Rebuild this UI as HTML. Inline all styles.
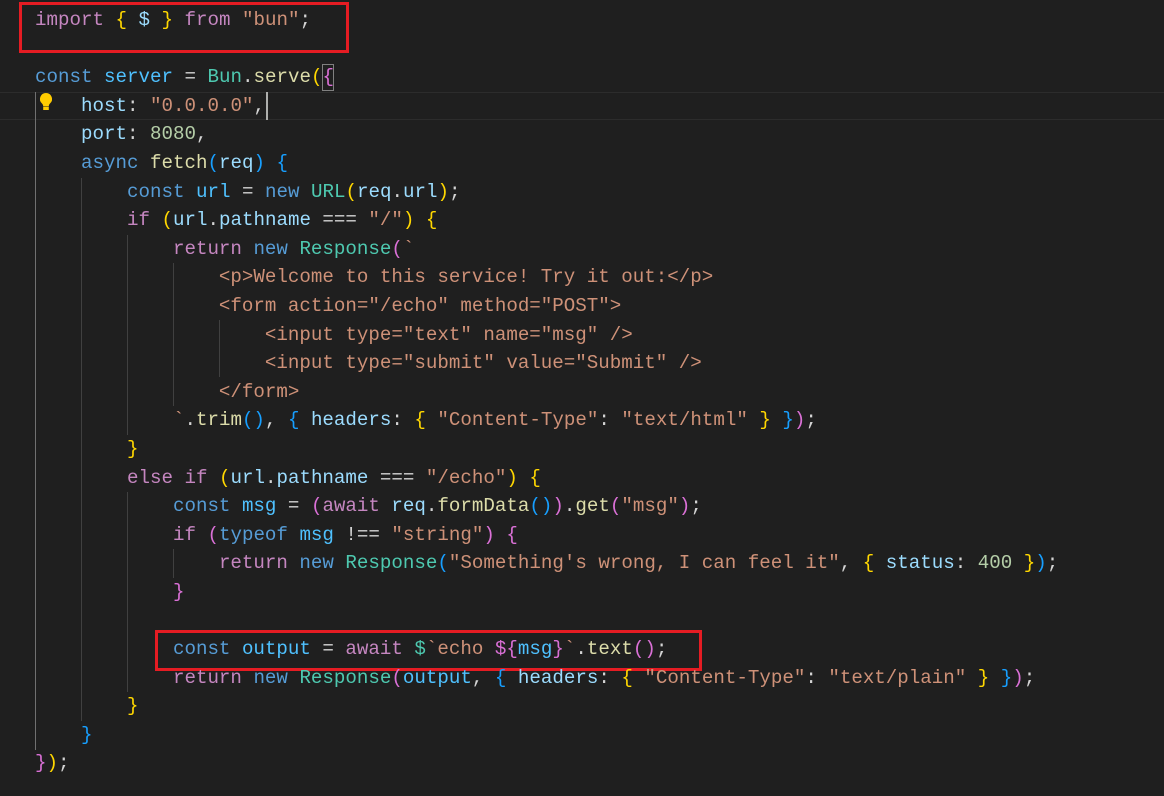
<!DOCTYPE html><html><head><style>
body{margin:0;background:#1f1f1f;width:1164px;height:796px;overflow:hidden;position:relative}
pre{margin:0;position:absolute;left:35px;top:6px;font-family:"Liberation Mono",monospace;font-size:19.17px;line-height:28.6px;color:#d4d4d4}
.k{color:#569cd6}.c{color:#c586c0}.v{color:#9cdcfe}.o{color:#4fc1ff}.f{color:#dcdcaa}.t{color:#4ec9b0}.s{color:#ce9178}.n{color:#b5cea8}
.y{color:#ffd700}.p{color:#da70d6}.b{color:#179fff}
.g{position:absolute;width:1px;background:#404040}
.box{position:absolute;border:3px solid #e51c23;box-sizing:border-box}
</style></head><body>
<div style="position:absolute;left:0;top:92px;width:1164px;height:28px;border-top:1px solid #2c2c2c;border-bottom:1px solid #2c2c2c;box-sizing:border-box"></div>
<div class="g" style="left:35px;top:92px;height:658px;background:#707070"></div>
<div class="g" style="left:81px;top:178px;height:543px"></div>
<div class="g" style="left:127px;top:235px;height:200px"></div>
<div class="g" style="left:127px;top:492px;height:200px"></div>
<div class="g" style="left:173px;top:263px;height:143px"></div>
<div class="g" style="left:173px;top:549px;height:29px"></div>
<div class="g" style="left:219px;top:320px;height:57px"></div>
<div style="position:absolute;left:322px;top:64px;width:12px;height:27px;border:1px solid #808080;box-sizing:border-box"></div>
<div style="position:absolute;left:266px;top:92px;width:2px;height:28px;background:#aeafad"></div>
<svg style="position:absolute;left:38px;top:92px" width="16" height="20" viewBox="0 0 16 20"><path d="M8 1a6 6 0 0 0-4 10.5c1 1 1.2 2 1.2 3h5.6c0-1 .2-2 1.2-3A6 6 0 0 0 8 1z" fill="#ffcc00"/><rect x="5.2" y="15" width="5.6" height="3" fill="#ffcc00"/></svg>
<div class="box" style="left:19px;top:2px;width:330px;height:51px"></div>
<div class="box" style="left:155px;top:630px;width:547px;height:41px"></div>
<pre><span class="c">import</span> <span class="y">{</span> <span class="v">$</span> <span class="y">}</span> <span class="c">from</span> <span class="s">"bun"</span>;

<span class="k">const</span> <span class="o">server</span> = <span class="t">Bun</span>.<span class="f">serve</span><span class="y">(</span><span class="p">{</span>
    <span class="v">host</span>: <span class="s">"0.0.0.0"</span>,
    <span class="v">port</span>: <span class="n">8080</span>,
    <span class="k">async</span> <span class="f">fetch</span><span class="b">(</span><span class="v">req</span><span class="b">)</span> <span class="b">{</span>
        <span class="k">const</span> <span class="o">url</span> = <span class="k">new</span> <span class="t">URL</span><span class="y">(</span><span class="v">req</span>.<span class="v">url</span><span class="y">)</span>;
        <span class="c">if</span> <span class="y">(</span><span class="v">url</span>.<span class="v">pathname</span> === <span class="s">"/"</span><span class="y">)</span> <span class="y">{</span>
            <span class="c">return</span> <span class="k">new</span> <span class="t">Response</span><span class="p">(</span><span class="s">`
                &lt;p&gt;Welcome to this service! Try it out:&lt;/p&gt;
                &lt;form action="/echo" method="POST"&gt;
                    &lt;input type="text" name="msg" /&gt;
                    &lt;input type="submit" value="Submit" /&gt;
                &lt;/form&gt;
            `</span>.<span class="f">trim</span><span class="b">()</span>, <span class="b">{</span> <span class="v">headers</span>: <span class="y">{</span> <span class="s">"Content-Type"</span>: <span class="s">"text/html"</span> <span class="y">}</span> <span class="b">}</span><span class="p">)</span>;
        <span class="y">}</span>
        <span class="c">else</span> <span class="c">if</span> <span class="y">(</span><span class="v">url</span>.<span class="v">pathname</span> === <span class="s">"/echo"</span><span class="y">)</span> <span class="y">{</span>
            <span class="k">const</span> <span class="o">msg</span> = <span class="p">(</span><span class="c">await</span> <span class="v">req</span>.<span class="f">formData</span><span class="b">()</span><span class="p">)</span>.<span class="f">get</span><span class="p">(</span><span class="s">"msg"</span><span class="p">)</span>;
            <span class="c">if</span> <span class="p">(</span><span class="k">typeof</span> <span class="o">msg</span> !== <span class="s">"string"</span><span class="p">)</span> <span class="p">{</span>
                <span class="c">return</span> <span class="k">new</span> <span class="t">Response</span><span class="b">(</span><span class="s">"Something's wrong, I can feel it"</span>, <span class="y">{</span> <span class="v">status</span>: <span class="n">400</span> <span class="y">}</span><span class="b">)</span>;
            <span class="p">}</span>

            <span class="k">const</span> <span class="o">output</span> = <span class="c">await</span> <span class="t">$</span><span class="s">`echo </span><span class="p">${</span><span class="o">msg</span><span class="p">}</span><span class="s">`</span>.<span class="f">text</span><span class="p">()</span>;
            <span class="c">return</span> <span class="k">new</span> <span class="t">Response</span><span class="p">(</span><span class="o">output</span>, <span class="b">{</span> <span class="v">headers</span>: <span class="y">{</span> <span class="s">"Content-Type"</span>: <span class="s">"text/plain"</span> <span class="y">}</span> <span class="b">}</span><span class="p">)</span>;
        <span class="y">}</span>
    <span class="b">}</span>
<span class="p">}</span><span class="y">)</span>;</pre>
</body></html>
